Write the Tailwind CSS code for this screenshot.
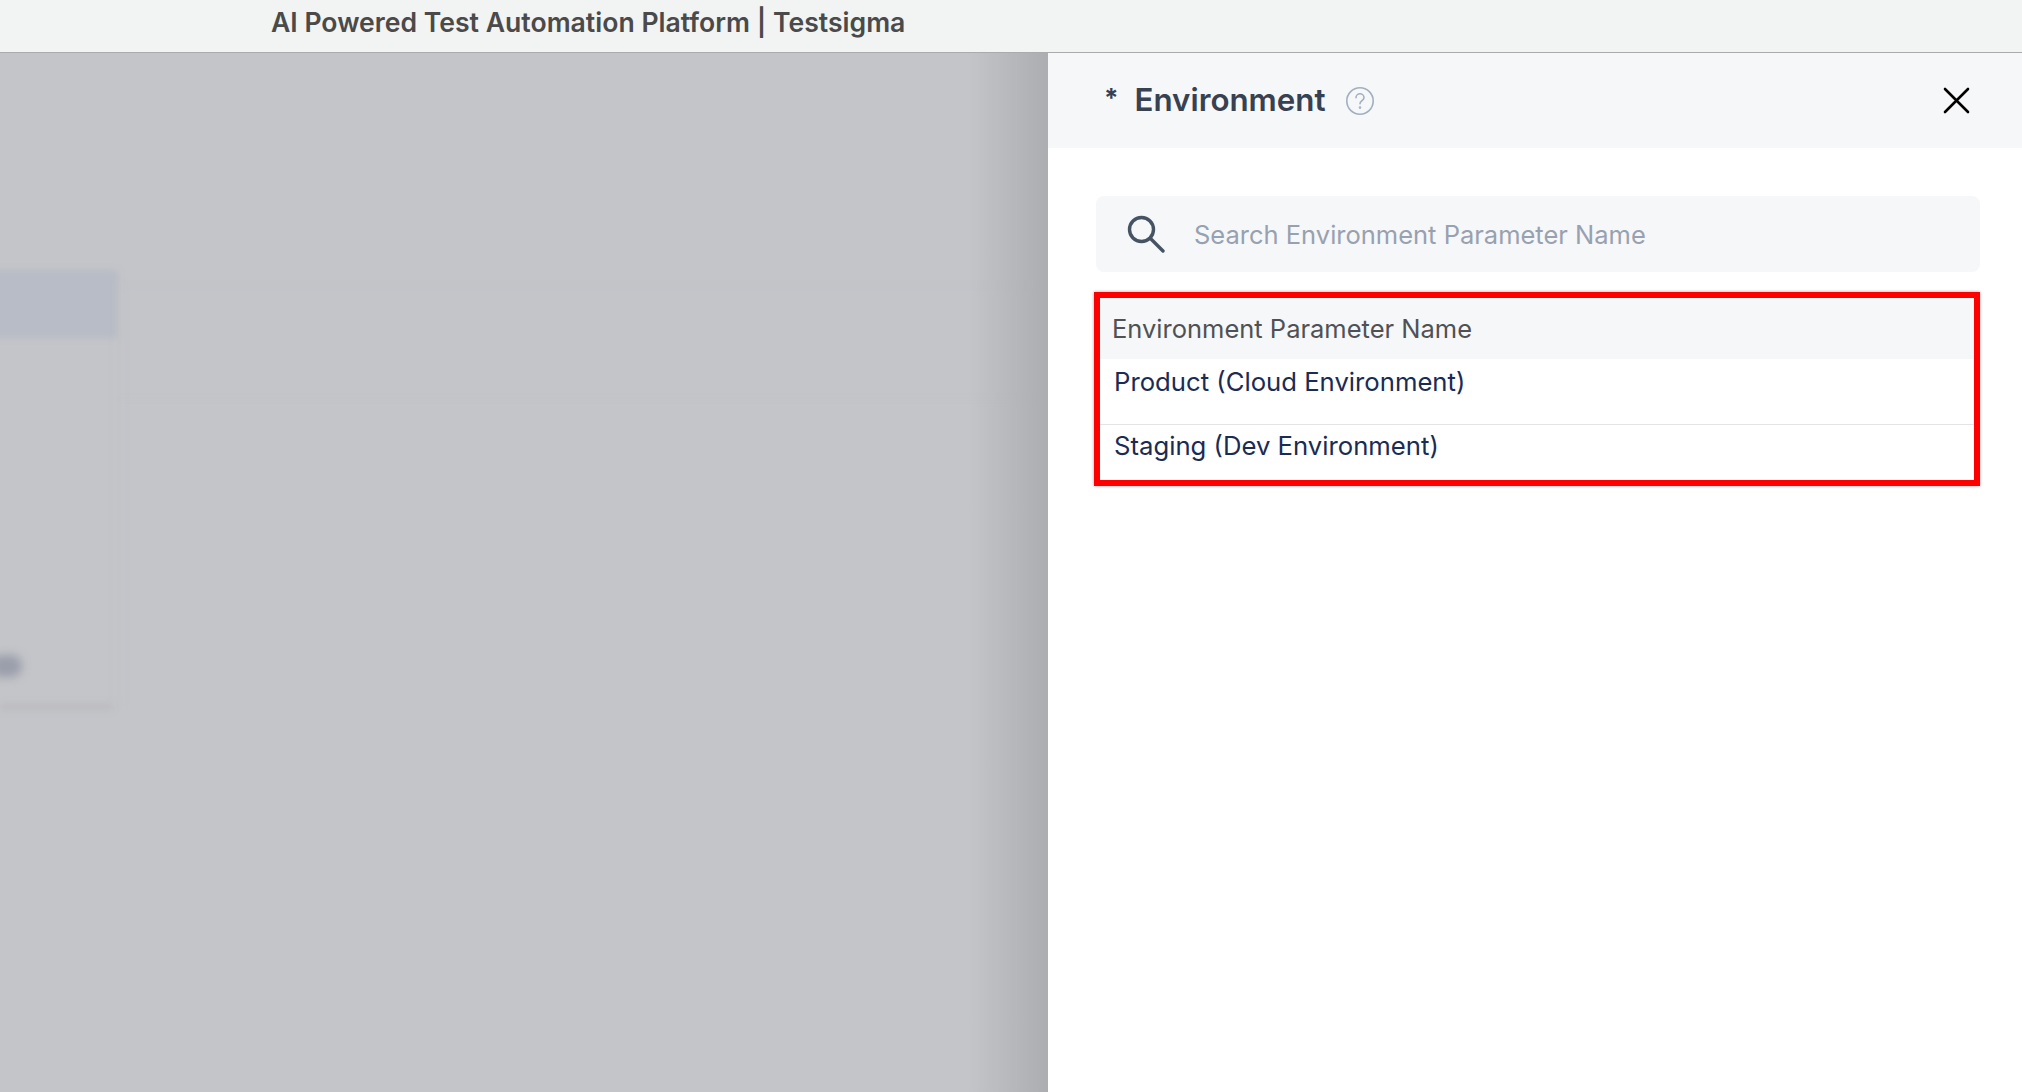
<!DOCTYPE html>
<html lang="en">
<head>
    <meta charset="UTF-8">
    <title>AI Powered Test Automation Platform | Testsigma</title>
    <script src="https://cdn.jsdelivr.net/npm/@tailwindcss/browser@4"></script>
</head>
<body class="h-[1092px] w-[2022px] overflow-hidden bg-[#c4c5c9] font-['Inter',sans-serif]">
    <!-- Window title bar -->
    <div class="relative z-20 flex h-[53px] items-center border-b border-[#a9abac] bg-[#f2f4f3] pb-[6px] pl-[271px]">
        <h1 class="text-[26.6px] font-semibold text-[#4a4a4a]">AI Powered Test Automation Platform | Testsigma</h1>
    </div>

    <div class="flex h-[1039px]">
        <!-- Blurred page behind the drawer -->
        <div class="relative w-[1048px] overflow-hidden">
            <div class="absolute left-[-20px] top-[217px] h-[68px] w-[138px] rounded bg-[#b8bcc6] blur-[3px]"></div>
            <div class="absolute left-[-20px] top-[232px] h-[420px] w-[140px] border-r-2 border-[#c1c2c6] blur-[4px]"></div>
            <div class="absolute left-[-10px] top-[602px] h-[22px] w-[32px] rounded-full bg-[#9a9eab] blur-[5px]"></div>
            <div class="absolute left-0 top-[650px] h-[8px] w-[112px] bg-[#bcbdc1] blur-[3px]"></div>
            <div class="absolute left-[120px] top-[232px] h-px w-[928px] bg-[#c0c1c5] blur-[2px]"></div>
            <div class="absolute left-[120px] top-[345px] h-px w-[928px] bg-[#c2c3c7] blur-[2px]"></div>
            <div class="absolute inset-y-0 right-0 w-[80px] bg-gradient-to-r from-transparent to-[#acadb1]"></div>
        </div>

        <!-- Environment drawer -->
        <div class="flex w-[974px] flex-col bg-white">
            <div class="flex h-[95px] items-center justify-between bg-[#f6f7f9] pl-[56px] pr-[52px]">
                <div class="flex items-center">
                    <span class="mr-[16px] mt-[-6px] text-[26px] font-bold text-[#374151]">*</span>
                    <h2 class="text-[31.3px] font-semibold text-[#374151]">Environment</h2>
                    <svg class="ml-[19px] h-[30px] w-[30px]" viewBox="0 0 30 30" fill="none" stroke="#a3afc0" stroke-width="1.6" stroke-linecap="round">
                        <circle cx="15" cy="15" r="13.2"></circle>
                        <path d="M11 11.8a4 4 0 0 1 8 0c0 2.8-4 3-4 6"></path>
                        <circle cx="15" cy="21.6" r="0.5" fill="#a3afc0"></circle>
                    </svg>
                </div>
                <svg class="h-[27px] w-[27px]" viewBox="0 0 27 27" fill="none" stroke="#000000" stroke-width="2.6" stroke-linecap="round">
                    <path d="M2 2l23 23M25 2L2 25"></path>
                </svg>
            </div>

            <div class="px-[48px] pt-[48px] pr-[42px]">
                <!-- Search -->
                <div class="flex h-[76px] items-center rounded-lg bg-[#f6f7f9] pl-[31px]">
                    <svg class="h-[38px] w-[38px] shrink-0" viewBox="0 0 38 38" fill="none" stroke="#465364" stroke-width="3.4" stroke-linecap="round">
                        <circle cx="14.5" cy="14.5" r="12"></circle>
                        <path d="M23.5 23.5L36 36"></path>
                    </svg>
                    <span class="ml-[29px] pt-[3px] text-[25.5px] text-[#98a1af]">Search Environment Parameter Name</span>
                </div>

                <!-- Parameter list, highlighted -->
                <div class="ml-[-2px] mt-[20px] h-[194px] border-[6px] border-[#ff0000] shadow-[0_0_3px_rgba(0,0,0,0.35)]">
                    <div class="flex h-[61px] items-center bg-[#f6f7f9] pl-[12px] pt-[1px] text-[25.5px] text-[#4f5155]">Environment Parameter Name</div>
                    <div class="h-[66px] border-b border-[#e2e4ea] pl-[14px] pt-[4px] text-[25.7px] text-[#1a2b54]">Product (Cloud Environment)</div>
                    <div class="pl-[14px] pt-[2px] text-[25.7px] text-[#1a2b54]">Staging (Dev Environment)</div>
                </div>
            </div>
        </div>
    </div>
</body>
</html>
